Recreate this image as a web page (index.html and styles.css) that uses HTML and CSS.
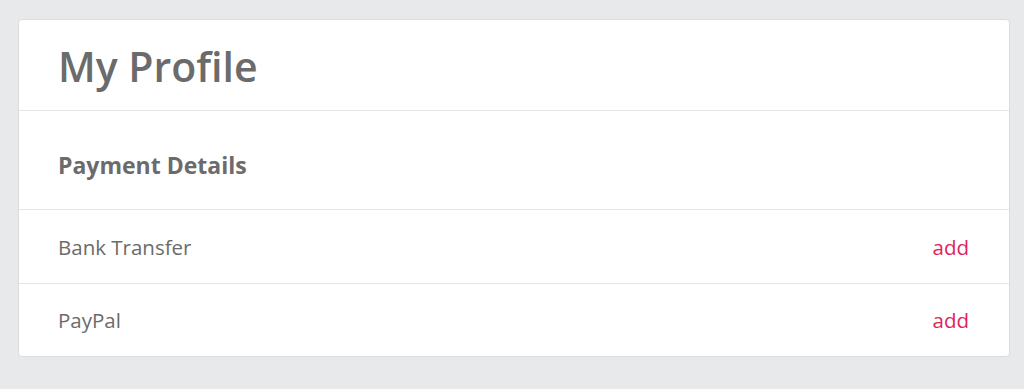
FILE: index.html
```html
<!DOCTYPE html>
<html>
<head>
<meta charset="utf-8">
<link rel="stylesheet" href="styles.css">
</head>
<body>
<div class="card">
  <div class="card-header"><h1 class="title">My Profile</h1></div>
  <div class="section-header"><h2 class="section-title">Payment Details</h2></div>
  <div class="row"><span class="row-label">Bank Transfer</span><a class="row-action">add</a></div>
  <div class="row"><span class="row-label">PayPal</span><a class="row-action">add</a></div>
</div>
</body>
</html>
```
FILE: styles.css
```css
html, body { margin: 0; padding: 0; }
body {
  background: #e8e9eb;
  font-family: "Open Sans", "Liberation Sans", sans-serif;
  color: #6b6b6b;
  padding: 19px 14px 0 18px;
  height: 389px;
  box-sizing: border-box;
}
.card {
  background: #fff;
  border: 1px solid #dcdcde;
  border-radius: 4px;
  box-sizing: border-box;
  width: 992px;
}
.card-header {
  height: 91px;
  display: flex;
  align-items: center;
  padding: 0 39px;
  border-bottom: 1px solid #e6e6e8;
  box-sizing: border-box;
}
.title {
  margin: 0;
  font-size: 41px;
  font-weight: 600;
  color: #6b6b6b;
  line-height: 1;
  padding-top: 2px;
}
.section-header {
  height: 99px;
  display: flex;
  align-items: center;
  padding: 0 39px;
  border-bottom: 1px solid #e6e6e8;
  box-sizing: border-box;
}
.section-title {
  margin: 0;
  font-size: 23px;
  font-weight: 700;
  color: #6b6b6b;
  padding-top: 10px;
}
.row {
  height: 73px;
  display: flex;
  align-items: center;
  justify-content: space-between;
  padding: 0 40px 0 39px;
  box-sizing: border-box;
  font-size: 20.5px;
}
.row + .row { border-top: 1px solid #e6e6e8; }
.row-label { color: #6b6b6b; }
.row-action { color: #e0245e; cursor: pointer; }
```
